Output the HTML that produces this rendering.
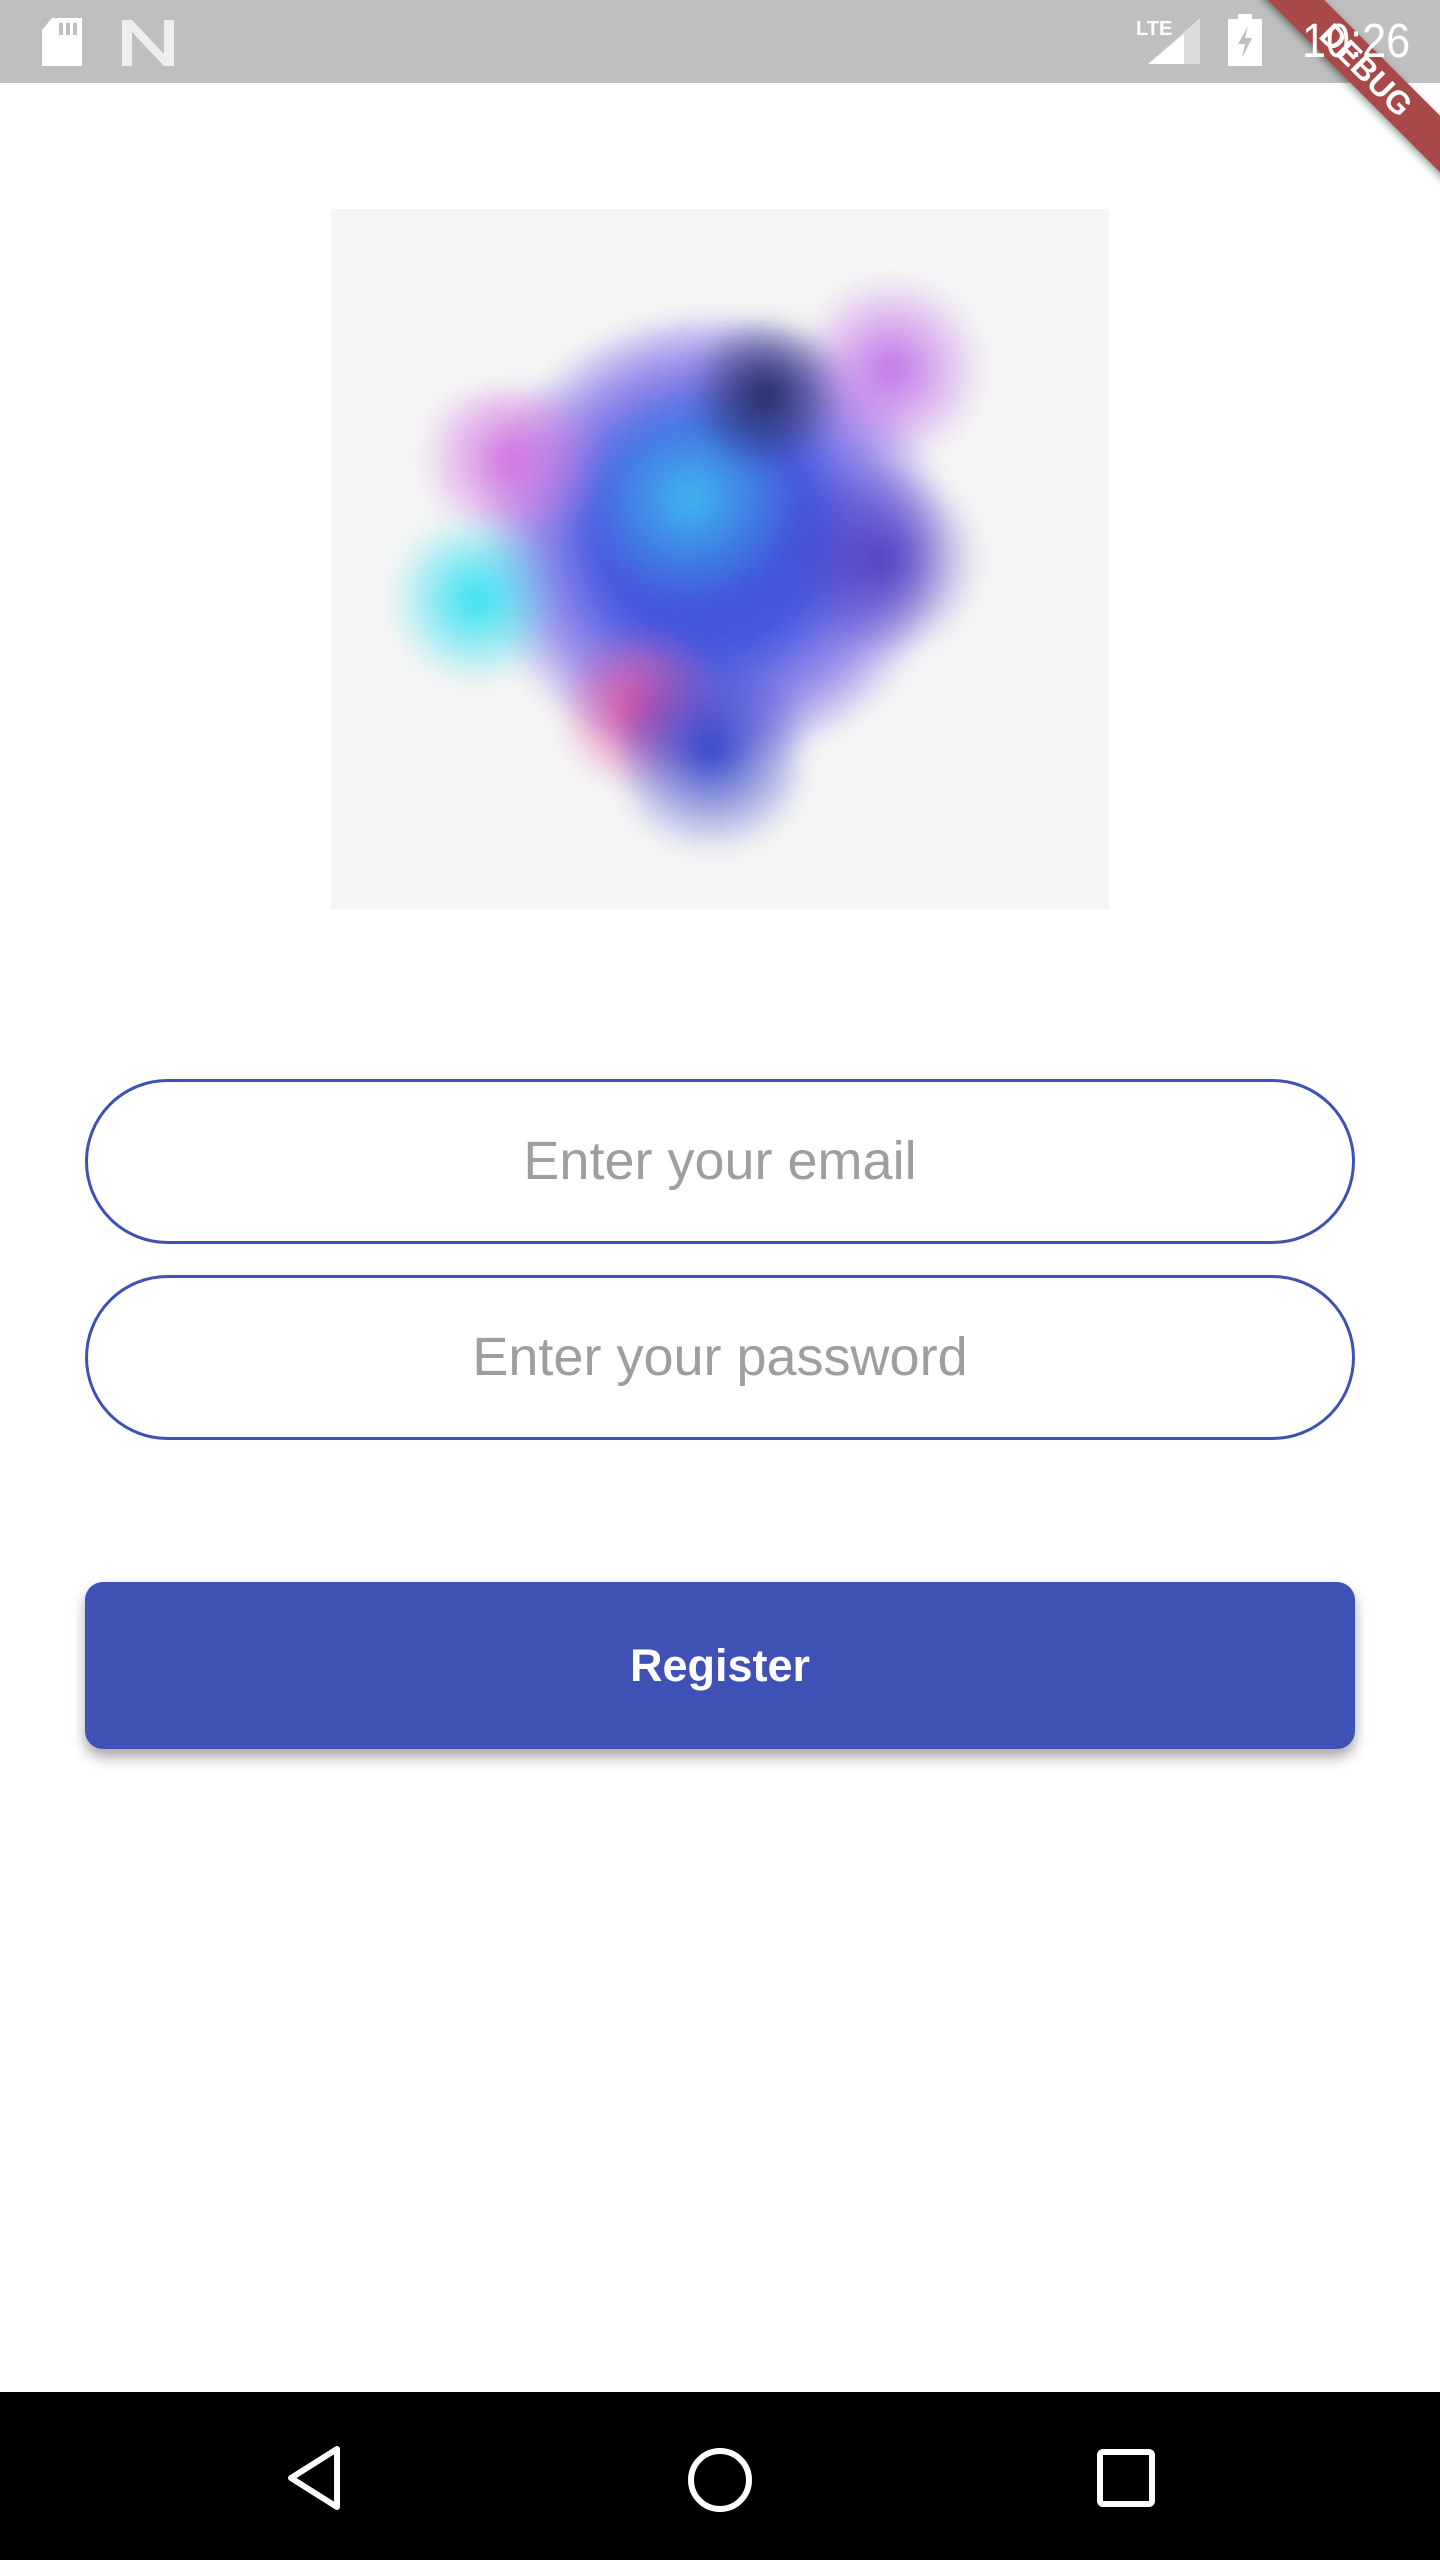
<!DOCTYPE html>
<html><head><meta charset="utf-8"><style>
*{margin:0;padding:0;box-sizing:border-box}
body{width:1440px;height:2560px;background:#fff;position:relative;overflow:hidden;font-family:"Liberation Sans",sans-serif}
.status{position:absolute;left:0;top:0;width:1440px;height:83px;background:#bfbfbf}
.time{position:absolute;right:30px;top:10px;color:#fff;font-size:48px;line-height:64px;z-index:5;transform:scaleX(.9);transform-origin:right}
.img{position:absolute;left:331px;top:209px;width:778px;height:700px;background:#f5f5f5;overflow:hidden}
.blob{position:absolute;border-radius:50%;filter:blur(10px)}
.field{position:absolute;left:85px;width:1270px;height:165px;border:3px solid #3f51b5;border-radius:83px;text-align:center;line-height:159px;font-size:54px;color:#9e9e9e}
.btn{position:absolute;left:85px;top:1582px;width:1270px;height:167px;background:#3f51b5;border-radius:18px;color:#fff;font-size:45px;font-weight:bold;text-align:center;line-height:167px;box-shadow:0 8px 14px rgba(0,0,0,.35)}
.nav{position:absolute;left:0;top:2392px;width:1440px;height:168px;background:#000}
.ribbon{position:absolute;right:-96px;top:50px;width:340px;height:40px;background:#a84848;transform:rotate(45deg);color:#fff;font-weight:bold;font-size:32px;text-align:center;line-height:40px;box-shadow:0 3px 8px rgba(0,0,0,.4);z-index:4}
</style></head><body>
<div class="status">
 <svg style="position:absolute;left:42px;top:18px" width="40" height="48"><path d="M10 0H40V48H0V12Z" fill="#fff"/><rect x="17" y="5" width="4" height="12" fill="#bfbfbf"/><rect x="24" y="5" width="4" height="12" fill="#bfbfbf"/><rect x="31" y="5" width="4" height="12" fill="#bfbfbf"/></svg>
 <svg style="position:absolute;left:122px;top:20px" width="52" height="46"><path d="M0 0H10L42 34V0H52V46H42L10 12V46H0Z" fill="#eee"/></svg>
 <div style="position:absolute;left:1136px;top:18px;color:#fff;font-size:20px;font-weight:bold">LTE</div>
 <svg style="position:absolute;left:1148px;top:18px" width="52" height="46"><path d="M52 0V46H0Z" fill="#ddd"/><path d="M36 16V46H0Z" fill="#fff"/></svg>
 <svg style="position:absolute;left:1228px;top:14px" width="34" height="52"><rect x="10" y="0" width="14" height="6" fill="#fff"/><rect x="0" y="5" width="34" height="47" fill="#fff"/><path d="M20 12L10 30H17L14 44L24 24H17Z" fill="#bfbfbf"/></svg>
</div>
<div class="time">10:26</div>
<div class="ribbon">DEBUG</div>
<div class="img">
 <div class="blob" style="left:140px;top:110px;width:480px;height:440px;background:radial-gradient(circle,#3a4fd8 0%,#4a5ae0 35%,rgba(100,80,230,.6) 55%,transparent 72%)"></div>
 <div class="blob" style="left:250px;top:180px;width:220px;height:220px;background:radial-gradient(circle,#40b8f0,transparent 70%)"></div>
 <div class="blob" style="left:70px;top:180px;width:220px;height:140px;background:radial-gradient(circle,#d070e0,transparent 70%)"></div>
 <div class="blob" style="left:460px;top:70px;width:200px;height:180px;background:radial-gradient(circle,#c070e8,transparent 70%)"></div>
 <div class="blob" style="left:60px;top:300px;width:170px;height:180px;background:radial-gradient(circle,#30e0f0,transparent 70%)"></div>
 <div class="blob" style="left:220px;top:420px;width:180px;height:160px;background:radial-gradient(circle,#e050a0,transparent 70%)"></div>
 <div class="blob" style="left:350px;top:110px;width:170px;height:150px;background:radial-gradient(circle,#202a60,transparent 70%)"></div>
 <div class="blob" style="left:290px;top:420px;width:180px;height:240px;background:radial-gradient(circle,#3040c8,transparent 70%)"></div>
 <div class="blob" style="left:450px;top:250px;width:200px;height:200px;background:radial-gradient(circle,#5040c0,transparent 70%)"></div>
</div>
<div class="field" style="top:1079px">Enter your email</div>
<div class="field" style="top:1275px">Enter your password</div>
<div class="btn">Register</div>
<div class="nav">
 <svg style="position:absolute;left:285px;top:53px" width="60" height="66"><path d="M52 4V62L6 33Z" fill="none" stroke="#fff" stroke-width="6" stroke-linejoin="round"/></svg>
 <svg style="position:absolute;left:686px;top:54px" width="68" height="68"><circle cx="34" cy="34" r="29" fill="none" stroke="#fff" stroke-width="6"/></svg>
 <svg style="position:absolute;left:1096px;top:56px" width="60" height="60"><rect x="4" y="4" width="52" height="52" rx="3" fill="none" stroke="#fff" stroke-width="6"/></svg>
</div>
</body></html>
